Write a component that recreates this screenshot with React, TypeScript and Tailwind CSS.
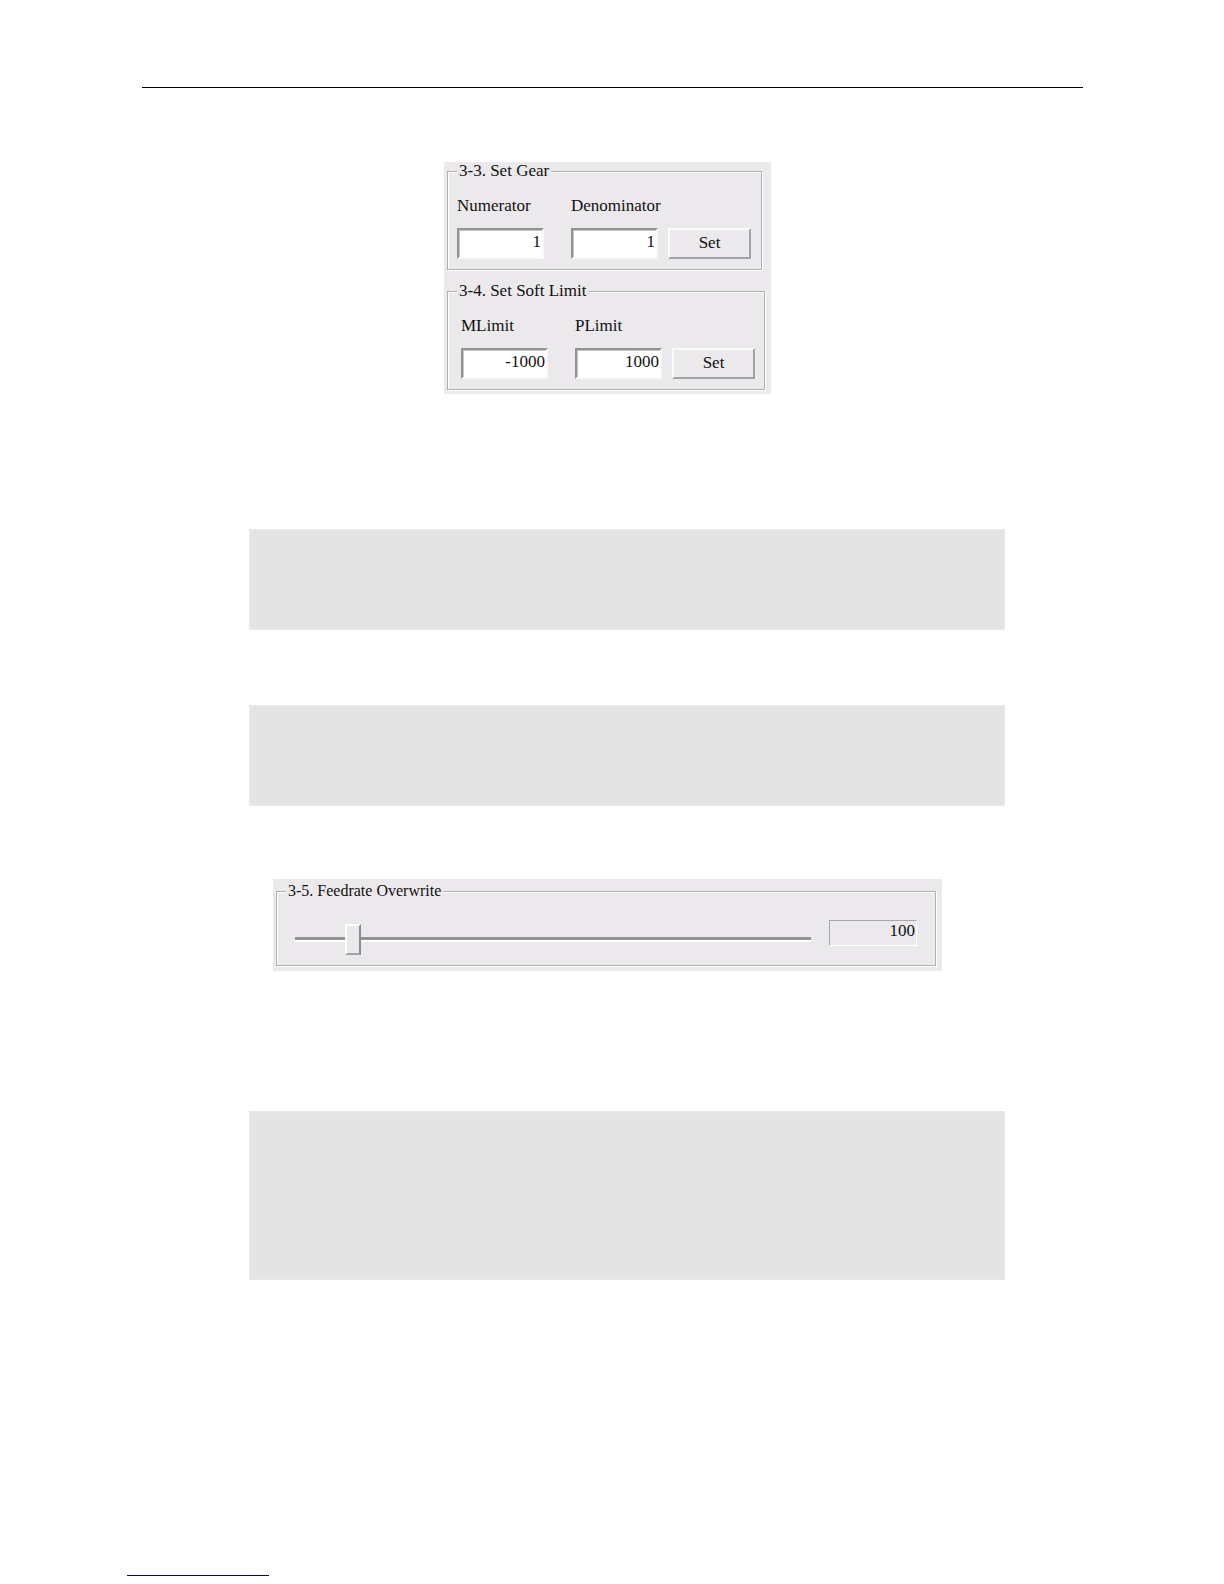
import { useState } from 'react';
import type { ReactNode } from 'react';

const gear = [
  { id: 'numerator', label: 'Numerator', value: '1' },
  { id: 'denominator', label: 'Denominator', value: '1' },
];

const softLimit = [
  { id: 'mlimit', label: 'MLimit', value: '-1000' },
  { id: 'plimit', label: 'PLimit', value: '1000' },
];

export default function App() {
  return (
    <main className="flex min-h-screen flex-col bg-white pt-[87px] pb-2 font-['Liberation_Serif',serif] text-[17px] leading-5 text-[#111]">
      <hr className="mr-[141px] ml-[142px] border-black" />

      <section className="mt-[74px] mr-[9px] flex w-[327px] flex-col gap-3 self-center bg-[#ebe9eb] pr-1.5 pb-1 pl-[3px]">
        <Group title="3-3. Set Gear" className="mr-[3px]">
          <SetForm fields={gear} />
        </Group>
        <Group title="3-4. Set Soft Limit">
          <div className="pl-1">
            <SetForm fields={softLimit} />
          </div>
        </Group>
      </section>

      <Block className="mt-[135px] h-[101px]" />
      <Block className="mt-[75px] h-[101px]" />

      <section className="mt-[73px] mr-[9px] w-full max-w-[669px] self-center bg-[#ebe9eb] pt-[3px] pr-1.5 pb-[5px] pl-[3px] text-[16px]">
        <Group title="3-5. Feedrate Overwrite">
          <Feedrate />
        </Group>
      </section>

      <Block className="mt-[140px] h-[169px]" />

      <hr className="mt-auto ml-[127px] w-[142px] border-[#00008b]" />
    </main>
  );
}

function Group({
  title,
  className = '',
  children,
}: {
  title: string;
  className?: string;
  children: ReactNode;
}) {
  return (
    <fieldset
      className={`min-w-0 border border-[#b0afb1] px-[9px] pb-2.5 shadow-[1px_1px_0_#fff,inset_1px_1px_0_#fff] ${className}`}
    >
      <legend className="bg-[#ebe9eb] px-0.5 leading-[18px]">{title}</legend>
      {children}
    </fieldset>
  );
}

function SetForm({ fields }: { fields: typeof gear }) {
  return (
    <div className="flex items-end gap-2.5 pt-4">
      <div className="flex gap-[27px]">
        {fields.map((field) => (
          <div key={field.id} className="flex w-[87px] flex-col gap-3">
            <label htmlFor={field.id} className="whitespace-nowrap">
              {field.label}
            </label>
            <input
              id={field.id}
              defaultValue={field.value}
              className="h-[31px] w-full border-2 border-t-[#929194] border-r-[#f8f8f8] border-b-[#f8f8f8] border-l-[#929194] bg-white pr-px pb-[3px] text-right shadow-[inset_1px_1px_0_#c5c4c7]"
            />
          </div>
        ))}
      </div>
      <button
        type="button"
        className="h-[31px] w-[83px] border-2 border-t-[#fafafa] border-r-[#a2a1a4] border-b-[#a2a1a4] border-l-[#fafafa] bg-[#ebe9eb] pb-0.5"
      >
        Set
      </button>
    </div>
  );
}

function Feedrate() {
  const [rate, setRate] = useState(100);

  return (
    <div className="flex items-start gap-[18px] pt-5 pr-[9px] pl-[9px] text-[17px]">
      <input
        id="feedrate"
        type="range"
        aria-label="Feedrate Overwrite"
        min={0}
        max={1000}
        value={rate}
        onChange={(event) => setRate(Number(event.target.value))}
        className="mt-[3px] h-8 min-w-0 flex-1 appearance-none bg-transparent [&::-webkit-slider-runnable-track]:h-[5px] [&::-webkit-slider-runnable-track]:border-t-[3px] [&::-webkit-slider-runnable-track]:border-b-2 [&::-webkit-slider-runnable-track]:border-t-[#929194] [&::-webkit-slider-runnable-track]:border-b-white [&::-webkit-slider-thumb]:-mt-4 [&::-webkit-slider-thumb]:h-[31px] [&::-webkit-slider-thumb]:w-4 [&::-webkit-slider-thumb]:appearance-none [&::-webkit-slider-thumb]:border-2 [&::-webkit-slider-thumb]:border-t-white [&::-webkit-slider-thumb]:border-r-[#8c8b8e] [&::-webkit-slider-thumb]:border-b-[#a2a1a4] [&::-webkit-slider-thumb]:border-l-white [&::-webkit-slider-thumb]:bg-[#ebe9eb]"
      />
      <output
        htmlFor="feedrate"
        className="h-[26px] w-[88px] border border-t-[#a8a7aa] border-r-white border-b-white border-l-[#a8a7aa] pr-px text-right leading-5"
      >
        {rate}
      </output>
    </div>
  );
}

function Block({ className }: { className: string }) {
  return (
    <div
      className={`mr-[219px] ml-[249px] border-2 border-[#e7e7e7] bg-[#e4e4e4] ${className}`}
    />
  );
}
